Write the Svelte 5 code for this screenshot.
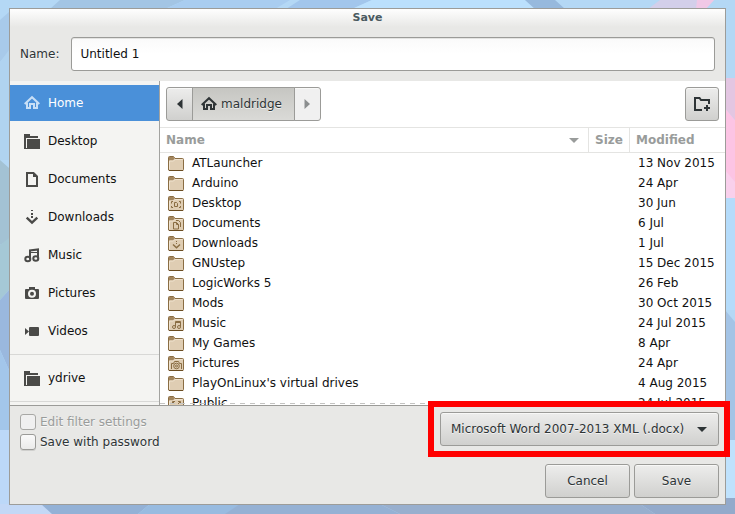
<script>
  let fileName = $state('Untitled 1');
  let current = $state('Home');
  let withPassword = $state(false);

  const places = [
    { name: 'Home', icon: 'home' },
    { name: 'Desktop', icon: 'folder' },
    { name: 'Documents', icon: 'document' },
    { name: 'Downloads', icon: 'download' },
    { name: 'Music', icon: 'music' },
    { name: 'Pictures', icon: 'camera' },
    { name: 'Videos', icon: 'video' }
  ];
  const bookmarks = [{ name: 'ydrive', icon: 'folder' }];

  const files = [
    { name: 'ATLauncher', date: '13 Nov 2015' },
    { name: 'Arduino', date: '24 Apr' },
    { name: 'Desktop', date: '30 Jun', emblem: 'desktop' },
    { name: 'Documents', date: '6 Jul', emblem: 'document' },
    { name: 'Downloads', date: '1 Jul', emblem: 'download' },
    { name: 'GNUstep', date: '15 Dec 2015' },
    { name: 'LogicWorks 5', date: '26 Feb' },
    { name: 'Mods', date: '30 Oct 2015' },
    { name: 'Music', date: '24 Jul 2015', emblem: 'music' },
    { name: 'My Games', date: '8 Apr' },
    { name: 'Pictures', date: '24 Apr', emblem: 'camera' },
    { name: "PlayOnLinux's virtual drives", date: '4 Aug 2015' },
    { name: 'Public', date: '24 Jul 2015', emblem: 'public' }
  ];
</script>

{#snippet symbol(kind)}
  <svg class="icon" width="16" height="16" viewBox="0 0 16 16" aria-hidden="true">
    {#if kind === 'home'}
      <path d="M.7 9 8 2.200 15.300 9" fill="none" stroke="currentColor" stroke-width="2" />
      <path d="M3 7.500V13H6V9H10V13H13V7.500" fill="none" stroke="currentColor" stroke-width="2" />
    {:else if kind === 'folder'}
      <path d="M0 1H6V3H14V5H2V15H0Z" fill="currentColor" />
      <path d="M1 15H16V6H3V16H0V14Z" fill="currentColor" />
      <path d="M3 6H16V16H3Z" fill="currentColor" />
      <path d="M2.500 14V5.500H14" fill="none" stroke="#f4f4f2" stroke-width="1" />
    {:else if kind === 'document'}
      <path d="M3 2H9.5L13 5.5V15H3Z" fill="none" stroke="currentColor" stroke-width="2" />
      <path d="M9 1V6H14Z" fill="currentColor" />
    {:else if kind === 'download'}
      <path d="M7 1H9V2H7ZM7 4H9V6H7ZM7 7H9V9H7Z" fill="currentColor" />
      <path d="M2.700 8.700 8 13.600 13.300 8.700" fill="none" stroke="currentColor" stroke-width="2.400" />
    {:else if kind === 'music'}
      <path d="M6 12V3.500L14 2.500V11.500" fill="none" stroke="currentColor" stroke-width="2" />
      <path d="M6 5.500H14" stroke="currentColor" stroke-width="1" />
      <ellipse cx="3.800" cy="12" rx="2.500" ry="2.200" fill="none" stroke="currentColor" stroke-width="2" />
      <ellipse cx="11.800" cy="11.500" rx="2.500" ry="2.200" fill="none" stroke="currentColor" stroke-width="2" />
    {:else if kind === 'camera'}
      <path d="M5 2H11V4H14Q15 4 15 5V13Q15 14 14 14H2Q1 14 1 13V5Q1 4 2 4H5ZM8 4.8A4 4 0 1 0 8 12.8 4 4 0 1 0 8 4.8Z" fill="currentColor" fill-rule="evenodd" />
      <circle cx="8" cy="8.800" r="2" fill="currentColor" />
    {:else if kind === 'video'}
      <path d="M1 5 5 8.5 1 12Z" fill="currentColor" />
      <rect x="5" y="4" width="10" height="9" rx="1" fill="currentColor" />
    {/if}
  </svg>
{/snippet}

{#snippet folder(emblem)}
  <svg class="icon" width="16" height="16" viewBox="0 0 16 16" aria-hidden="true">
    <path d="M.5 15V2.500Q.5 1.500 1.500 1.500H5.500L7 3.500H14.500Q15.500 3.500 15.500 4.500V14.500Q15.500 15.500 14.500 15.500H1.500Q.5 15.500 .5 14.500Z" fill="#dfcdb3" stroke="#8a6d43" />
    <path d="M1 2H5.500L6.500 3.500 5 5.500H1Z" fill="#a3865e" />
    <path d="M1.500 14V6H5.500L7 4.500H14.500" fill="none" stroke="#efe3d0" />
    <path d="M1 15.500H15" stroke="#6b4d22" />
    <g fill="none" stroke="#8a6d43" stroke-width="1">
      {#if emblem === 'desktop'}
        <path d="M3.500 8.500V6.500H5M11 6.500H12.500V8.500M3.500 11V12.500H5M11 12.500H12.500V11M6.500 7.500H8.500L9.500 8.500V11.500H6.500Z" />
      {:else if emblem === 'document'}
        <path d="M5.500 7.500H8.500L10.500 9.500V14H5.500ZM8.500 7.500V9.500H10.500M8 5.500H10.500L12.500 7.500V12" />
      {:else if emblem === 'download'}
        <path d="M8 6.500H9M8 8.500H9" />
        <path d="M5 9.500 8.500 12.700 12 9.500" stroke-width="1.500" />
      {:else if emblem === 'music'}
        <path d="M7.500 12V6.500H12.500V11.500M7.500 7.500H12.500" />
        <circle cx="6" cy="12" r="1.500" />
        <circle cx="11" cy="12" r="1.500" />
      {:else if emblem === 'camera'}
        <path d="M3.500 14V8.500H5.500L6.500 6.500H10.500L11.500 8.500H13.500V14" />
        <circle cx="8.500" cy="11" r="2.800" />
        <circle cx="8.500" cy="11" r="1" />
      {:else if emblem === 'public'}
        <path d="M4.500 9V6.500H7M10 6.500H12.500V9M5 7 7 9M12 7 10 9M4.500 11V13.500H7M12.500 11V13.500H10" />
      {/if}
    </g>
  </svg>
{/snippet}

{#snippet placeRow(place)}
  <li>
    <button type="button" class="place" class:selected={current === place.name} onclick={() => (current = place.name)}>
      {@render symbol(place.icon)}
      <span>{place.name}</span>
    </button>
  </li>
{/snippet}

<div class="desktop">
  <svg class="wallpaper" viewBox="0 0 735 514" preserveAspectRatio="none" aria-hidden="true">
    <rect width="735" height="514" fill="#b4d8f5" />
    <path d="M60 0H185L165 9H50Z" fill="#a3c5e4" />
    <path d="M185 0H290L275 9H165Z" fill="#a9cdf0" />
    <path d="M300 0H372L352 9H286Z" fill="#a2c6ec" />
    <path d="M372 0H525L535 9H352Z" fill="#bbe0fd" />
    <path d="M525 0H555L565 9H535Z" fill="#97b9dd" />
    <path d="M660 0H714L705 9H648Z" fill="#d3cfea" />
    <path d="M697 0H714L706 9H696Z" fill="#f0c8e6" />
    <path d="M0 20 9 12V52L0 62Z" fill="#a8caea" />
    <path d="M0 62 9 50V160H0Z" fill="#b0d3f0" />
    <path d="M0 160 9 168V240L0 245Z" fill="#a3c2d4" />
    <path d="M0 245 9 238V290L0 300Z" fill="#a5c8d6" />
    <path d="M0 300 9 290V370L0 350Z" fill="#9ab8de" />
    <path d="M0 350 9 370V430H0Z" fill="#a3c6ea" />
    <path d="M0 430H9V514H0Z" fill="#bcd8f8" />
    <path d="M725 78H735V120L725 108Z" fill="#e3c6e2" />
    <path d="M725 108 735 120V198H725Z" fill="#fcc4e4" />
    <path d="M725 170 735 182V198H725Z" fill="#f9d0ec" />
    <path d="M725 198H735V310H725Z" fill="#b5dcfb" />
    <path d="M725 310 735 322V440H725Z" fill="#a4c4e6" />
    <path d="M725 440H735V498H725Z" fill="#bfe2fd" />
    <path d="M0 504H46L52 514H0Z" fill="#c3d8f6" />
    <path d="M41 504H150L138 514H52Z" fill="#93b1d6" />
    <path d="M150 504H240V514H138Z" fill="#98bbe0" />
    <path d="M240 504H380L400 514H225Z" fill="#95b1d4" />
    <path d="M380 504H640L655 514H400Z" fill="#98afce" />
    <path d="M640 504 725 498H735V514H655Z" fill="#93aacb" />
  </svg>

  <form class="dialog" onsubmit={(e) => e.preventDefault()}>
    <header>
      <h1>Save</h1>
      <div class="name-row">
        <label for="name">Name:</label>
        <input id="name" type="text" bind:value={fileName} />
      </div>
    </header>

    <div class="browser">
      <nav>
        <ul>
          {#each places as place}{@render placeRow(place)}{/each}
        </ul>
        <hr />
        <ul>
          {#each bookmarks as place}{@render placeRow(place)}{/each}
        </ul>
        <hr />
      </nav>

      <main>
        <div class="toolbar">
          <div class="pathbar">
            <button type="button" class="step" aria-label="Back">
              <svg width="6" height="10" viewBox="0 0 6 10"><path d="M5.500 0V10L0 5Z" fill="currentColor" /></svg>
            </button>
            <button type="button" class="crumb">{@render symbol('home')}<span>maldridge</span></button>
            <button type="button" class="step" aria-label="Forward" disabled>
              <svg width="6" height="10" viewBox="0 0 6 10"><path d="M.5 0V10L6 5Z" fill="currentColor" /></svg>
            </button>
          </div>
          <button type="button" class="new-folder" aria-label="Create Folder">
            <svg width="16" height="16" viewBox="0 0 16 16">
              <path d="M8 14H1V2H5.500L7 4H15V8" fill="none" stroke="currentColor" stroke-width="2" />
              <path d="M10 12H16M13 9V15" stroke="currentColor" stroke-width="2" />
            </svg>
          </button>
        </div>

        <table>
          <thead>
            <tr>
              <th class="col-name">
                <div>
                  <span>Name</span>
                  <svg width="10" height="5" viewBox="0 0 10 5" aria-hidden="true"><path d="M0 0H10L5 5Z" fill="currentColor" /></svg>
                </div>
              </th>
              <th class="col-size">Size</th>
              <th class="col-date">Modified</th>
            </tr>
          </thead>
          <tbody>
            {#each files as file}
              <tr>
                <td><div>{@render folder(file.emblem)}<span>{file.name}</span></div></td>
                <td></td>
                <td class="date">{file.date}</td>
              </tr>
            {/each}
          </tbody>
        </table>
        <div class="more"></div>
      </main>
    </div>

    <footer>
      <div class="options">
        <label class="off"><input type="checkbox" disabled />Edit filter settings</label>
        <label><input type="checkbox" bind:checked={withPassword} />Save with password</label>
      </div>
      <div class="actions">
        <div class="format">
          <select aria-label="File type">
            <option>Microsoft Word 2007-2013 XML (.docx)</option>
          </select>
          <svg width="10" height="5" viewBox="0 0 10 5" aria-hidden="true"><path d="M0 0H10L5 5Z" fill="currentColor" /></svg>
        </div>
        <div class="buttons">
          <button type="button">Cancel</button>
          <button type="submit">Save</button>
        </div>
      </div>
    </footer>
  </form>
</div>

<style>
  .desktop {
    position: relative;
    box-sizing: border-box;
    display: flex;
    height: 100vh;
    padding: 8px 9px 9px;
    font: 12px/20px "DejaVu Sans", sans-serif;
    color: #2e3436;
  }
  .desktop * {
    box-sizing: border-box;
  }
  .wallpaper {
    position: absolute;
    inset: 0;
    width: 100%;
    height: 100%;
  }
  .dialog {
    position: relative;
    flex: 1;
    display: flex;
    flex-direction: column;
    min-width: 0;
    border: 1px solid #9c9c99;
    background: #e8e8e6;
  }
  button,
  input,
  select {
    margin: 0;
    font: inherit;
    color: inherit;
  }
  button,
  select {
    border: 1px solid #9b9b98;
    border-radius: 3px;
    background: linear-gradient(#ededec, #d0d0ce);
    box-shadow: inset 0 1px #f8f8f7;
    text-shadow: 0 1px rgb(255 255 255 / 70%);
  }
  .icon {
    flex: none;
    display: block;
  }

  header {
    background: linear-gradient(#fefefe, #e8e8e6 18px);
  }
  h1 {
    margin: 0;
    font-size: 11px;
    line-height: 18px;
    text-align: center;
    color: #4a5a60;
  }
  .name-row {
    display: flex;
    align-items: center;
    gap: 12px;
    padding: 10px;
  }
  .name-row label {
    text-shadow: 0 1px #f8f8f7;
  }
  .name-row input {
    flex: 1;
    min-width: 0;
    height: 34px;
    padding: 0 8px;
    border: 1px solid #9b9b98;
    border-radius: 3px;
    background: linear-gradient(#fafafa, #fff 50%);
    box-shadow: inset 0 1px #e4e4e2;
    color: #111;
  }

  .browser {
    flex: 1;
    display: flex;
    min-height: 0;
    overflow: hidden;
    background: #fff;
    border-bottom: 1px solid #9b9b98;
  }
  nav {
    flex: none;
    width: 150px;
    padding-top: 3px;
    border-right: 1px solid #a3a3a0;
    background: #f4f4f2;
  }
  nav ul {
    margin: 0;
    padding: 0;
    list-style: none;
  }
  nav li {
    padding: 1px 0;
  }
  nav hr {
    margin: 4px 0;
    border: 0;
    border-top: 1px solid #d8d8d6;
  }
  .place {
    display: flex;
    align-items: center;
    gap: 8px;
    width: 100%;
    height: 36px;
    padding: 0 14px;
    border: 0;
    border-radius: 0;
    background: none;
    box-shadow: none;
    text-shadow: none;
    color: #4a4a48;
  }
  .place span {
    color: #111;
  }
  .place.selected {
    background: #4a90d9;
    color: #c8dff6;
  }
  .place.selected span {
    color: #fff;
  }

  main {
    position: relative;
    flex: 1;
    min-width: 0;
  }
  .toolbar {
    display: flex;
    justify-content: space-between;
    padding: 6px;
    border-bottom: 1px solid #e4e4e2;
  }
  .pathbar {
    display: flex;
    height: 34px;
  }
  .pathbar button {
    display: flex;
    align-items: center;
    justify-content: center;
    padding: 0;
  }
  .pathbar .step {
    width: 27px;
  }
  .pathbar .step:first-child {
    border-radius: 3px 0 0 3px;
  }
  .pathbar .step:last-child {
    border-radius: 0 3px 3px 0;
    background: #f0f0f0;
    color: #8b8e8f;
  }
  .pathbar .crumb {
    gap: 4px;
    margin: 0 -1px;
    padding: 0 12px 0 8px;
    border-radius: 0;
    background: linear-gradient(#c6c6c2, #dadad7);
    box-shadow: none;
  }
  .new-folder {
    display: flex;
    align-items: center;
    justify-content: center;
    width: 34px;
    height: 34px;
    padding: 0;
  }

  table {
    width: 100%;
    border-collapse: separate;
    border-spacing: 0;
    table-layout: fixed;
    color: #111;
  }
  th {
    height: 25px;
    padding: 0 6px;
    border-bottom: 1px solid #e4e4e2;
    text-align: left;
    color: #999c9b;
  }
  th + th {
    border-left: 1px solid #e4e4e2;
  }
  .col-size {
    width: 41px;
  }
  .col-date {
    width: 96px;
  }
  th div {
    display: flex;
    align-items: center;
    justify-content: space-between;
    padding-right: 3px;
  }
  td {
    height: 20px;
    padding: 0 8px;
    white-space: nowrap;
  }
  td div {
    display: flex;
    align-items: center;
    gap: 8px;
  }
  td.date {
    padding-right: 0;
    padding-left: 9px;
  }
  .more {
    position: absolute;
    inset: auto 0 1px;
    height: 1px;
    background: repeating-linear-gradient(90deg, #c4c4c2 0 5px, transparent 5px 10px);
  }

  footer {
    display: flex;
    justify-content: space-between;
    padding: 6px 6px 6px 10px;
  }
  .options label {
    display: flex;
    align-items: center;
    gap: 4px;
    text-shadow: 0 1px #f8f8f7;
  }
  .options .off {
    color: #999c9b;
  }
  .options input {
    appearance: none;
    width: 16px;
    height: 16px;
    border: 1px solid #9b9b98;
    border-radius: 3px;
    background: linear-gradient(#fafafa, #ebebea);
    box-shadow: 0 1px #cfcfcd;
  }
  .options .off input {
    background: #f0f0f0;
    border-color: #a8a8a5;
    box-shadow: none;
  }
  .options input:checked {
    background: #4a90d9;
  }
  .actions {
    display: flex;
    flex-direction: column;
    align-items: flex-end;
    gap: 18px;
  }
  .format {
    position: relative;
    display: flex;
  }
  .format select {
    appearance: none;
    height: 34px;
    padding: 0 33px 0 10px;
  }
  .format svg {
    position: absolute;
    top: 15px;
    right: 12px;
    pointer-events: none;
  }
  .format::after {
    content: "";
    position: absolute;
    inset: -11px -11px -11px -12px;
    border: 6px solid #f00;
    pointer-events: none;
  }
  .buttons {
    display: flex;
    gap: 4px;
  }
  .buttons button {
    width: 85px;
    height: 34px;
    padding: 0;
  }
</style>
